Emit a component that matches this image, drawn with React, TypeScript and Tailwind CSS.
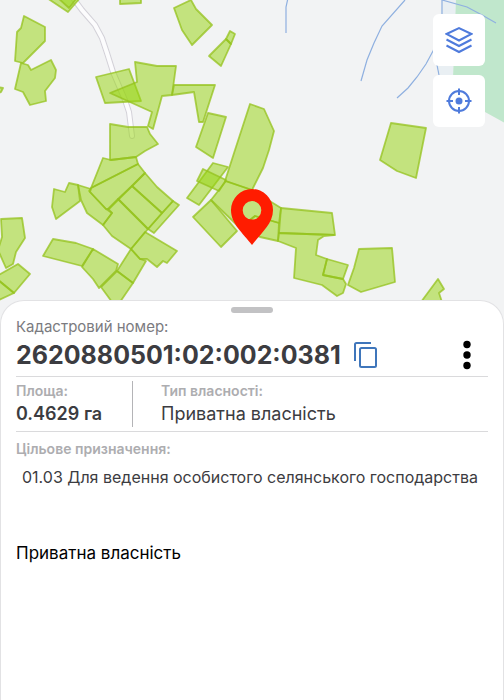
import React from 'react';

// Parcel outlines in map units
const PARCELS: string[] = [
    '47,-2 68,12 80,-2',
    '58,-2 69,8 77,-2',
    '24,16 45,27 45,41 32,54 23,63 15,61 17,32 21,28',
    '21,63 28,65 31,70 51,60 56,70 55,78 45,91 46,101 30,105 23,92 15,89',
    '-3,87 3,88 1,92 -3,94',
    '120,-2 120,4 141,3 141,-2',
    '96,77 129,69 141,101 105,103',
    '135,62 157,66 176,66 172,95 162,96 153,129 148,126 152,112 110,93 137,82',
    '110,124 128,127 147,127 150,134 158,144 145,151 136,157 110,160',
    '174,85 215,85 203,122 199,122 194,92 172,95',
    '208,113 226,117 213,158 196,147',
    '174,8 191,0 196,9 212,25 192,45 182,30',
    '226,39 231,44 221,66 209,56',
    '230,31 235,34 231,44 226,39',
    '250,104 264,109 274,131 269,150 263,168 252,190 225,181 235,150',
    '103,158 111,160 136,157 138,164 91,188',
    '138,164 145,173 109,209 106,209 89,191 91,188',
    '145,173 157,187 173,201 162,213 132,186',
    '173,201 179,205 154,233 148,229',
    '132,186 162,213 148,229 118,199',
    '118,199 148,229 131,249 112,236 103,225 112,213 108,209',
    '78,185 91,189 90,192 106,209 112,213 103,225 87,213 81,200',
    '54,189 65,192 69,183 78,185 80,201 56,219 52,207',
    '145,232 177,251 167,263 163,261 157,267 147,259 140,259 131,249',
    '131,249 140,259 146,261 133,283 117,271',
    '117,271 133,283 120,302 112,302 101,287',
    '93,249 118,264 116,271 99,288 93,279 82,267',
    '53,239 76,243 93,249 82,266 43,256',
    '1,219 22,218 25,238 16,252 13,264 6,268 -2,250 2,237',
    '18,264 30,274 14,293 -3,279 -3,276',
    '-3,279 14,293 -3,301',
    '213,163 228,167 199,205 187,198',
    '203,169 226,180 219,191 197,181',
    '211,200 226,181 252,190 281,208 279,223 255,216 240,228',
    '211,200 193,217 221,247 237,231',
    '240,228 255,216 279,223 278,241 260,237',
    '281,208 332,213 335,235 279,233',
    '279,233 334,235 324,236 318,240 316,255 327,259 323,275 343,279 346,284 343,293 337,296 322,285 294,278 296,248 278,241',
    '327,259 348,265 343,279 323,275',
    '359,249 392,248 395,282 361,292 348,285 354,268',
    '438,279 444,289 439,293 442,302 421,302',
    '391,123 426,128 416,178 397,171 380,160',
];

const STREAMS: string[] = [
    '288,-2 286,7 286,33',
    '405,0 382,26 374,43 367,60 361,81',
    '397,98 408,88 417,77 426,64 433,51 442,30 442,-2',
    '437,65 439,75',
    '442,0 467,7 482,15 496,23',
];

const ROAD = '73,-2 82,10 95,25 102,38 107,53 113,72 125,100 129,112 132,136';

const MapView: React.FC = () => (
    <svg
        className="block h-[340px] w-full bg-[#f2f3f4]"
        viewBox="0 0 504 340"
        preserveAspectRatio="xMidYMin slice"
        role="img"
        aria-label="Кадастрова карта"
    >
        <polygon points="442,0 456,0 453,75 440,75 436,60" fill="#e9eff3" />
        <polygon points="456,-1 453,78 485,112 505,123 505,-1" fill="#c0e7cc" />
        <g fill="none" stroke="#8fb0e0" strokeWidth="1.2">
            {STREAMS.map((points) => <polyline key={points} points={points} />)}
        </g>
        <polyline points={ROAD} fill="none" stroke="#d3d1d8" strokeWidth="6" strokeLinecap="round" />
        <polyline points={ROAD} fill="none" stroke="#fcfcfd" strokeWidth="4" strokeLinecap="round" />
        <g fill="#98d511" fillOpacity="0.52" stroke="#94c21c" strokeOpacity="0.75" strokeWidth="1.8" strokeLinejoin="round">
            {PARCELS.map((points) => <polygon key={points} points={points} />)}
        </g>
        {/* Selected parcel pin */}
        <path
            d="M252 189a21 21 0 0 0-21 21c0 14 12 23 21 35c9-12 21-21 21-35a21 21 0 0 0-21-21Zm0 12a9.3 9.3 0 1 1 0 18.6a9.3 9.3 0 0 1 0-18.6Z"
            fill="#ff1c00"
            fillRule="evenodd"
        />
    </svg>
);

interface MapButtonProps {
    label: string;
    children: React.ReactNode;
}

const MapButton: React.FC<MapButtonProps> = ({ label, children }) => (
    <button
        type="button"
        aria-label={label}
        className="flex size-[52px] items-center justify-center rounded-md bg-white text-[#4f7bdc]"
    >
        <svg width="28" height="28" viewBox="0 0 28 28" fill="none" stroke="currentColor" strokeWidth="2">
            {children}
        </svg>
    </button>
);

export default function App() {
    return (
        <div className="flex min-h-screen flex-col bg-[#f2f3f4] font-['Inter','Liberation_Sans',sans-serif] text-[#3c3c41]">
            <div className="relative">
                <MapView />
                <div className="absolute top-3.5 right-[19px] flex flex-col gap-[9px]">
                    <MapButton label="Шари">
                        <path d="M1.5 8 14 2l12.5 6L14 14.5ZM1.5 13.5 14 20l12.5-6.5M1.5 19.5 14 26l12.5-6.5" />
                    </MapButton>
                    <MapButton label="Моє місцезнаходження">
                        <circle cx="14" cy="14" r="10" />
                        <circle cx="14" cy="14" r="3.5" fill="currentColor" stroke="none" />
                        <path d="M14 1.5V8M14 20v6.5M1.5 14H8M20 14h6.5" />
                    </MapButton>
                </div>
            </div>

            <main className="relative -mt-10 flex-1 rounded-t-3xl border border-b-0 border-[#e2e2e4] bg-white px-[15px] pt-1.5">
                <div className="mx-auto h-1.5 w-[42px] rounded-full bg-[#c2c2c4]" />

                <p className="mt-1 text-[15px] leading-5 text-[#7b7b80]">Кадастровий номер:</p>
                <div className="flex h-10 items-center border-b border-[#dadadc] pb-[3px]">
                    <h1 className="text-[25px] leading-8 font-bold whitespace-nowrap">2620880501:02:002:0381</h1>
                    <button type="button" aria-label="Копіювати" className="ml-3 text-[#3f76bb]">
                        <svg width="26" height="28" viewBox="0 0 26 28" fill="none" stroke="currentColor" strokeWidth="2">
                            <path d="M2 20V3.5Q2 2 3.5 2H18" />
                            <rect x="7" y="7" width="16" height="19" rx="1.5" />
                        </svg>
                    </button>
                    <button type="button" aria-label="Меню" className="mr-4 ml-auto text-black">
                        <svg width="10" height="30" viewBox="0 0 10 30" fill="currentColor">
                            <circle cx="5" cy="4.5" r="3.7" />
                            <circle cx="5" cy="15" r="3.7" />
                            <circle cx="5" cy="25.5" r="3.7" />
                        </svg>
                    </button>
                </div>

                <dl className="flex border-b border-[#dadadc] py-1">
                    <div className="w-[117px] border-r border-[#b4b4b7]">
                        <dt className="text-[14px] leading-5 font-semibold text-[#adadb0]">Площа:</dt>
                        <dd className="text-[18px] leading-[26px] font-semibold">0.4629 га</dd>
                    </div>
                    <div className="pl-7">
                        <dt className="text-[14px] leading-5 font-semibold text-[#adadb0]">Тип власності:</dt>
                        <dd className="text-[18px] leading-[26px]">Приватна власність</dd>
                    </div>
                </dl>

                <h2 className="mt-[7px] text-[14px] leading-5 font-semibold text-[#adadb0]">Цільове призначення:</h2>
                <p className="mt-1.5 pl-1.5 text-[16px] leading-6">01.03 Для ведення особистого селянського господарства</p>
                <p className="mt-[52px] text-[17px] leading-6 text-black">Приватна власність</p>
            </main>
        </div>
    );
}
